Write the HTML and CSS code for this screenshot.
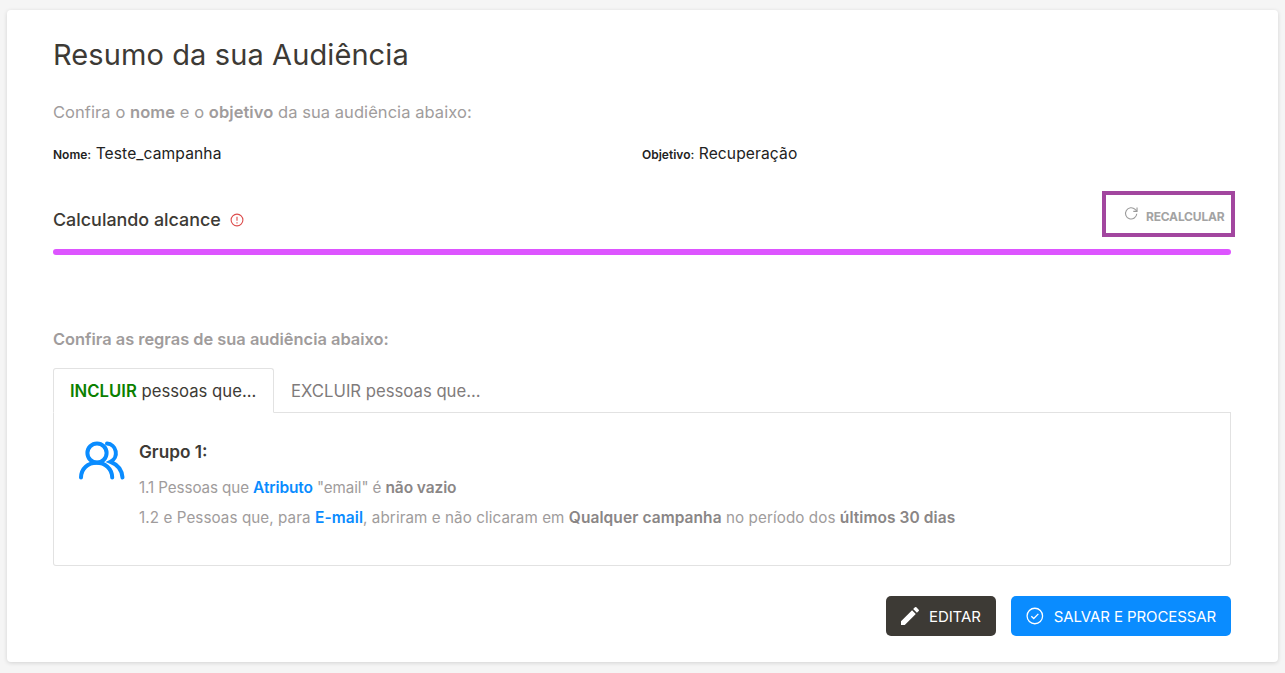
FILE: index.html
```html
<!DOCTYPE html>
<html lang="pt">
<head>
<meta charset="utf-8">
<title>Resumo da sua Audiência</title>
<link rel="stylesheet" href="styles.css">
</head>
<body>
<main class="card">
  <h1 class="title">Resumo da sua Audiência</h1>
  <p class="intro">Confira o <b>nome</b> e o <b>objetivo</b> da sua audiência abaixo:</p>
  <div class="meta">
    <div class="meta-item"><b>Nome:</b> Teste_campanha</div>
    <div class="meta-item"><b>Objetivo:</b> Recuperação</div>
  </div>
  <div class="reach-head">
    <div class="reach-label">Calculando alcance
      <svg class="info" viewBox="0 0 14 14" width="14" height="14"><circle cx="7" cy="7" r="5.9" fill="none" stroke="#dc4c4c" stroke-width="1.1"/><path d="M7 3.8v4" stroke="#dc4c4c" stroke-width="1.1" fill="none"/><path d="M7 9.2v1.2" stroke="#dc4c4c" stroke-width="1.1" fill="none"/></svg>
    </div>
    <button class="recalc">
      <svg viewBox="0 0 16 16" width="15" height="15"><path d="M13.6 8.3A6 6 0 1 1 11.9 3.7L13.7 5.4" fill="none" stroke="#9a9a9a" stroke-width="1.2"/><path d="M13.9 1.6V5.7H9.9" fill="none" stroke="#9a9a9a" stroke-width="1.2"/></svg>
      <span>RECALCULAR</span>
    </button>
  </div>
  <div class="bar"></div>
  <p class="rules">Confira as regras de sua audiência abaixo:</p>
  <div class="tabs">
    <div class="tab active"><b class="green">INCLUIR</b> pessoas que...</div>
    <div class="tab">EXCLUIR pessoas que...</div>
  </div>
  <section class="panel">
    <svg class="group-icon" viewBox="0 0 46 40" width="46" height="40"><circle cx="18" cy="12" r="9.6" fill="none" stroke="#0a8cff" stroke-width="4"/><path d="M2 36.5C2.2 27.5 9 21.8 17.5 21.8S33 27.5 33.2 36.5" fill="none" stroke="#0a8cff" stroke-width="4" stroke-linecap="round"/><path d="M28 2.6A9.6 9.6 0 0 1 31.5 20.8C38.5 23.5 43 29 43.5 36.5" fill="none" stroke="#0a8cff" stroke-width="4" stroke-linecap="round"/></svg>
    <div class="group">
      <h2 class="group-title">Grupo 1:</h2>
      <p class="rule rule-tight">1.1 Pessoas que <b class="blue">Atributo</b> "email" é <b>não vazio</b></p>
      <p class="rule rule-wide">1.2 e Pessoas que, para <b class="blue">E-mail</b>, abriram e não clicaram em <b>Qualquer campanha</b> no período dos <b>últimos 30 dias</b></p>
    </div>
  </section>
  <div class="actions">
    <button class="btn dark">
      <svg viewBox="0 0 24 24" width="24" height="24"><path fill="#fff" d="M3 17.25V21h3.75L17.81 9.94l-3.75-3.75L3 17.25zM20.71 7.04a1 1 0 0 0 0-1.41l-2.34-2.34a1 1 0 0 0-1.41 0l-1.83 1.83 3.75 3.75 1.83-1.83z"/></svg>
      EDITAR
    </button>
    <button class="btn blue-btn">
      <svg viewBox="0 0 18 18" width="18" height="18"><circle cx="9" cy="9" r="7.9" fill="none" stroke="#fff" stroke-width="1.3"/><path d="M5.4 9.2l2.5 2.4 4.7-4.8" fill="none" stroke="#fff" stroke-width="1.3"/></svg>
      SALVAR E PROCESSAR
    </button>
  </div>
</main>
</body>
</html>
```
FILE: styles.css
```css
* { box-sizing: border-box; }
html, body { margin: 0; height: 100%; }
body {
  background: #f5f5f5;
  padding: 10px 7px 11px;
  font-family: "Inter", "Liberation Sans", sans-serif;
  color: #3d3a35;
  overflow: hidden;
}
.card {
  height: 652px;
  background: #fff;
  border-radius: 4px;
  box-shadow: 0 1px 4px rgba(0,0,0,.14);
  padding: 27px 47px 0 46px;
}
.title { margin: 0; font-size: 29px; line-height: 36px; font-weight: 400; letter-spacing: .1px; }
.intro { margin: 27px 0 0; font-size: 16.5px; line-height: 24px; color: #a09c9c; letter-spacing: .06px; }
.intro b { font-weight: 600; }
.meta { display: grid; grid-template-columns: 589px 1fr; margin-top: 17px; height: 24px; align-items: center; font-size: 15.6px; letter-spacing: .1px; color: #222; }
.meta b { font-size: 12px; font-weight: 600; letter-spacing: 0; }
.reach-head { display: flex; justify-content: space-between; align-items: center; margin-top: 26px; height: 46px; }
.reach-label { display: flex; align-items: center; gap: 9px; font-size: 17.9px; font-weight: 500; margin-top: 10px; }
.info { margin-top: 1px; }
.recalc {
  display: flex; align-items: center; gap: 7px;
  width: 133px; height: 46px; margin-right: -4px;
  padding: 0 4px 0 18px;
  background: #fff; border: 4px solid #a2469f;
  color: #a3a3a3; font: 700 12px "Inter", sans-serif; letter-spacing: -.2px;
}
.recalc svg { margin-top: -2px; }
.recalc span { white-space: nowrap; margin-top: 4px; }
.bar { height: 6px; margin-top: 12px; border-radius: 3px; background: #dd55ff; }
.rules { margin: 74px 0 0; font-size: 16.4px; line-height: 20px; font-weight: 600; color: #a09c9c; }
.tabs { display: flex; margin-top: 19px; height: 45px; border-bottom: 1px solid #e2e2e2; }
.tab { padding: 0 16px; height: 45px; line-height: 44px; font-size: 16.7px; color: #7f7b7b; white-space: nowrap; border: 1px solid transparent; }
.tab.active { width: 221px; color: #3d3a35; background: #fff; border: 1px solid #e2e2e2; border-bottom-color: #fff; border-radius: 3px 3px 0 0; }
.green { color: #0a8000; font-weight: 600; }
.panel { display: flex; height: 153px; padding: 27px 24px 0 25px; border: 1px solid #e2e2e2; border-top: 0; border-radius: 0 0 3px 3px; }
.group-icon { flex: none; margin-top: 1px; }
.group { margin-left: 14px; }
.group-title { margin: 0; font-size: 17.2px; line-height: 24px; font-weight: 600; }
.rule { margin: 14px 0 0; font-size: 15.2px; line-height: 19px; color: #a09c9c; white-space: nowrap; }
.rule + .rule { margin-top: 11px; }
.rule-tight { letter-spacing: -.1px; }
.rule-wide { letter-spacing: .08px; }
.rule b { font-size: 15.5px; font-weight: 600; color: #8a8686; }
.rule b.blue { color: #0a8cff; }
.actions { display: flex; justify-content: flex-end; gap: 15px; margin-top: 30px; }
.btn {
  display: flex; align-items: center; gap: 7px; height: 40px; border: 0; border-radius: 5px; color: #fff;
  font: 400 15px "Inter", sans-serif; letter-spacing: -.1px; white-space: nowrap;
}
.dark { width: 110px; background: #3d3a35; padding: 0 12px; }
.blue-btn { width: 220px; background: #0a8cff; padding: 0 15px; gap: 10px; }
```
